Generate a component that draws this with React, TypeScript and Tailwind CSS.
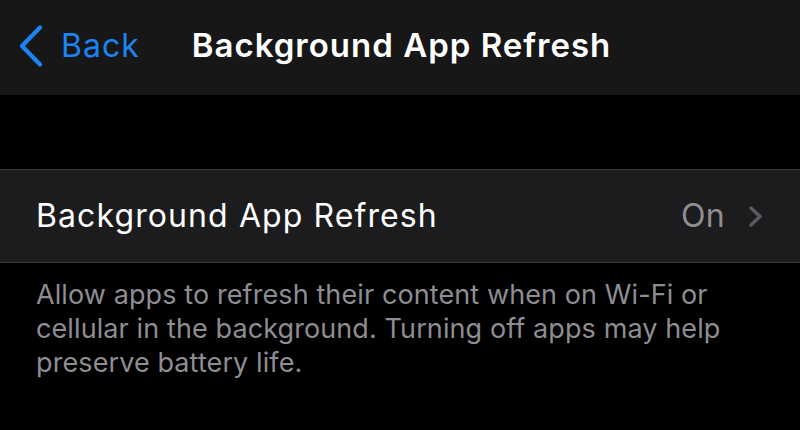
function BackChevron() {
  return (
    <svg width="24" height="42" viewBox="0 0 24 42" fill="none" aria-hidden="true">
      <path d="M21 2.5 L3 21 L21 39.5" stroke="#1a84f5" strokeWidth="4.2" strokeLinecap="round" strokeLinejoin="round" />
    </svg>
  );
}

function RowChevron() {
  return (
    <svg width="15" height="21" viewBox="0 0 15 21" fill="none" aria-hidden="true">
      <path d="M3 2 L12 10.5 L3 19" stroke="#5c5c60" strokeWidth="3.4" strokeLinecap="round" strokeLinejoin="round" />
    </svg>
  );
}

export default function App(): JSX.Element {
  return (
    <div
      className="flex h-[430px] w-[800px] flex-col overflow-hidden bg-black"
      style={{ fontFamily: "Inter, 'Noto Sans', sans-serif" }}
    >
      <header className="flex h-[95px] shrink-0 items-center bg-[#171717] pb-[4px]">
        <button type="button" className="flex items-center gap-[18px] pl-[19px] text-[#1a84f5]">
          <BackChevron />
          <span className="text-[32px] leading-none tracking-[1px]">Back</span>
        </button>
        <h1 className="ml-[52px] text-[33px] font-semibold leading-none tracking-[1px] text-white">
          Background App Refresh
        </h1>
      </header>

      <div className="h-[74px] shrink-0" />

      <div className="flex h-[94px] shrink-0 items-center border-y border-[#38383a] bg-[#1c1c1e] pl-[36px] pr-[37px]">
        <span className="flex-1 text-[32px] tracking-[1.1px] text-white">Background App Refresh</span>
        <span className="text-[32px] tracking-[0.3px] text-[#8e8e93]">On</span>
        <span className="ml-[23px] flex items-center">
          <RowChevron />
        </span>
      </div>

      <p className="px-[36px] pt-[15px] text-[27px] leading-[34px] tracking-[0.1px] text-[#8d8d92]">
        Allow apps to refresh their content when on Wi-Fi or cellular in the background. Turning off apps may help
        preserve battery life.
      </p>
    </div>
  );
}
